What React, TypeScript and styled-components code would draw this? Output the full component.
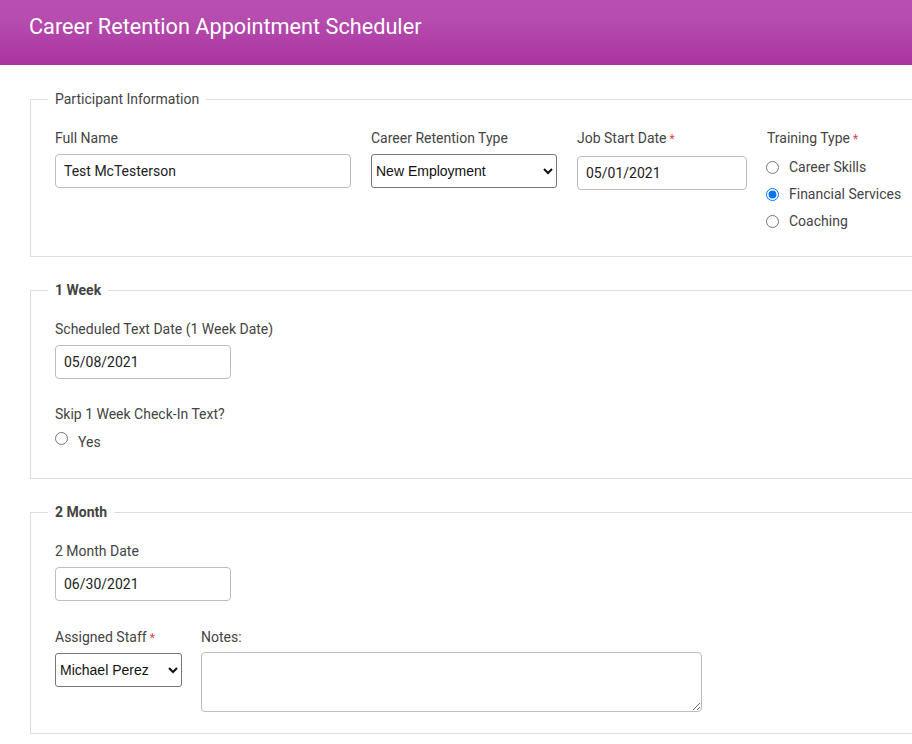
import React from "react";
import styled, { createGlobalStyle } from "styled-components";

const GlobalStyle = createGlobalStyle`
  html, body {
    margin: 0;
    padding: 0;
    overflow: hidden;
    background: #ffffff;
  }
  body {
    font-family: Roboto, "Liberation Sans", Arial, sans-serif;
    font-size: 14px;
    color: #444;
  }
  * { box-sizing: border-box; }
`;

const Page = styled.div`
  width: 1000px;
`;

const Header = styled.header`
  height: 65px;
  background: linear-gradient(to bottom, #b850b1 0%, #b54cae 30%, #ab33a0 100%);
  display: flex;
  align-items: center;
  padding: 0 0 12px 29px;
`;

const Title = styled.h1`
  margin: 0;
  font-family: Roboto, "Liberation Sans", sans-serif;
  font-weight: 400;
  font-size: 21.7px;
  color: #ffffff;
`;

const Main = styled.main`
  padding: 24px 0 0 30px;
  display: flex;
  flex-direction: column;
  gap: 23px;
`;

const Fieldset = styled.fieldset<{ $pb?: number }>`
  margin: 0;
  border: 1px solid #dddddd;
  padding: 19px 24px ${(p) => p.$pb ?? 26}px 24px;
  min-width: 0;
`;

const Legend = styled.legend<{ $bold?: boolean }>`
  padding: 0 7px;
  margin-left: -7px;
  font-size: 14px;
  line-height: 20px;
  color: #444;
  font-weight: ${(p) => (p.$bold ? 700 : 400)};
`;

const Row = styled.div<{ $mt?: number; $gap?: number }>`
  display: flex;
  align-items: flex-start;
  gap: ${(p) => p.$gap ?? 20}px;
  margin-top: ${(p) => p.$mt ?? 0}px;
`;

const Field = styled.div<{ $mt?: number }>`
  display: flex;
  flex-direction: column;
  align-items: flex-start;
  margin-top: ${(p) => p.$mt ?? 0}px;
`;

const Label = styled.label`
  font-size: 14px;
  line-height: 20px;
  color: #444;
  margin-bottom: 6px;
  white-space: nowrap;
`;

const Req = styled.span`
  color: #e0434f;
  margin-left: 3px;
  font-size: 12px;
`;

const TextInput = styled.input<{ $width: number; $mt?: number }>`
  width: ${(p) => p.$width}px;
  height: 34px;
  margin-top: ${(p) => p.$mt ?? 0}px;
  padding: 6px 8px;
  border: 1px solid #bdbdbd;
  border-radius: 4px;
  font-family: Roboto, "Liberation Sans", sans-serif;
  font-size: 14px;
  color: #222;
  background: #fff;
  outline: none;
`;

const Select = styled.select<{ $width: number; $mt?: number }>`
  width: ${(p) => p.$width}px;
  height: 34px;
  margin-top: ${(p) => p.$mt ?? 0}px;
  padding: 0;
  border: 1px solid #767676;
  border-radius: 3px;
  font-family: "Liberation Sans", Arial, sans-serif;
  font-size: 14px;
  color: #111;
  background: #fff;
`;

const TextArea = styled.textarea`
  width: 501px;
  height: 60px;
  margin-top: -1px;
  border: 1px solid #bdbdbd;
  border-radius: 4px;
  padding: 6px 8px;
  font-family: Roboto, "Liberation Sans", sans-serif;
  font-size: 14px;
  resize: both;
`;

const RadioList = styled.div`
  display: flex;
  flex-direction: column;
  gap: 7px;
  margin-top: 2px;
`;

const RadioRow = styled.label<{ $ml?: number }>`
  display: flex;
  align-items: center;
  gap: 10px;
  font-size: 14px;
  line-height: 20px;
  color: #444;
  margin-left: ${(p) => p.$ml ?? -1}px;
`;

const Radio = styled.input`
  margin: 0;
  width: 13px;
  height: 13px;
`;

const YesRow = styled(RadioRow)`
  align-items: flex-start;
  margin-top: -2px;
  & > input {
    margin-top: 4px;
  }
  & > span {
    margin-top: 4px;
  }
`;

export default function App() {
  return (
    <Page>
      <GlobalStyle />
      <Header>
        <Title>Career Retention Appointment Scheduler</Title>
      </Header>
      <Main>
        <Fieldset $pb={25}>
          <Legend>Participant Information</Legend>
          <Row>
            <Field>
              <Label>Full Name</Label>
              <TextInput $width={296} defaultValue="Test McTesterson" />
            </Field>
            <Field>
              <Label>Career Retention Type</Label>
              <Select $width={186} defaultValue="New Employment">
                <option>New Employment</option>
                <option>Promotion</option>
              </Select>
            </Field>
            <Field>
              <Label>
                Job Start Date<Req>*</Req>
              </Label>
              <TextInput $width={170} $mt={1} defaultValue="05/01/2021" />
            </Field>
            <Field>
              <Label>
                Training Type<Req>*</Req>
              </Label>
              <RadioList>
                <RadioRow>
                  <Radio type="radio" name="training" />
                  <span>Career Skills</span>
                </RadioRow>
                <RadioRow>
                  <Radio type="radio" name="training" defaultChecked />
                  <span>Financial Services</span>
                </RadioRow>
                <RadioRow>
                  <Radio type="radio" name="training" />
                  <span>Coaching</span>
                </RadioRow>
              </RadioList>
            </Field>
          </Row>
        </Fieldset>

        <Fieldset>
          <Legend $bold>1 Week</Legend>
          <Field>
            <Label>Scheduled Text Date (1 Week Date)</Label>
            <TextInput $width={176} defaultValue="05/08/2021" />
          </Field>
          <Field $mt={25}>
            <Label>Skip 1 Week Check-In Text?</Label>
            <YesRow $ml={0}>
              <Radio type="radio" name="skip" />
              <span>Yes</span>
            </YesRow>
          </Field>
        </Fieldset>

        <Fieldset $pb={21}>
          <Legend $bold>2 Month</Legend>
          <Field>
            <Label>2 Month Date</Label>
            <TextInput $width={176} defaultValue="06/30/2021" />
          </Field>
          <Row $mt={26} $gap={19}>
            <Field>
              <Label>
                Assigned Staff<Req>*</Req>
              </Label>
              <Select $width={127} $mt={-1} defaultValue="Michael Perez">
                <option>Michael Perez</option>
                <option>Jane Doe</option>
              </Select>
            </Field>
            <Field>
              <Label>Notes:</Label>
              <TextArea />
            </Field>
          </Row>
        </Fieldset>
      </Main>
    </Page>
  );
}
